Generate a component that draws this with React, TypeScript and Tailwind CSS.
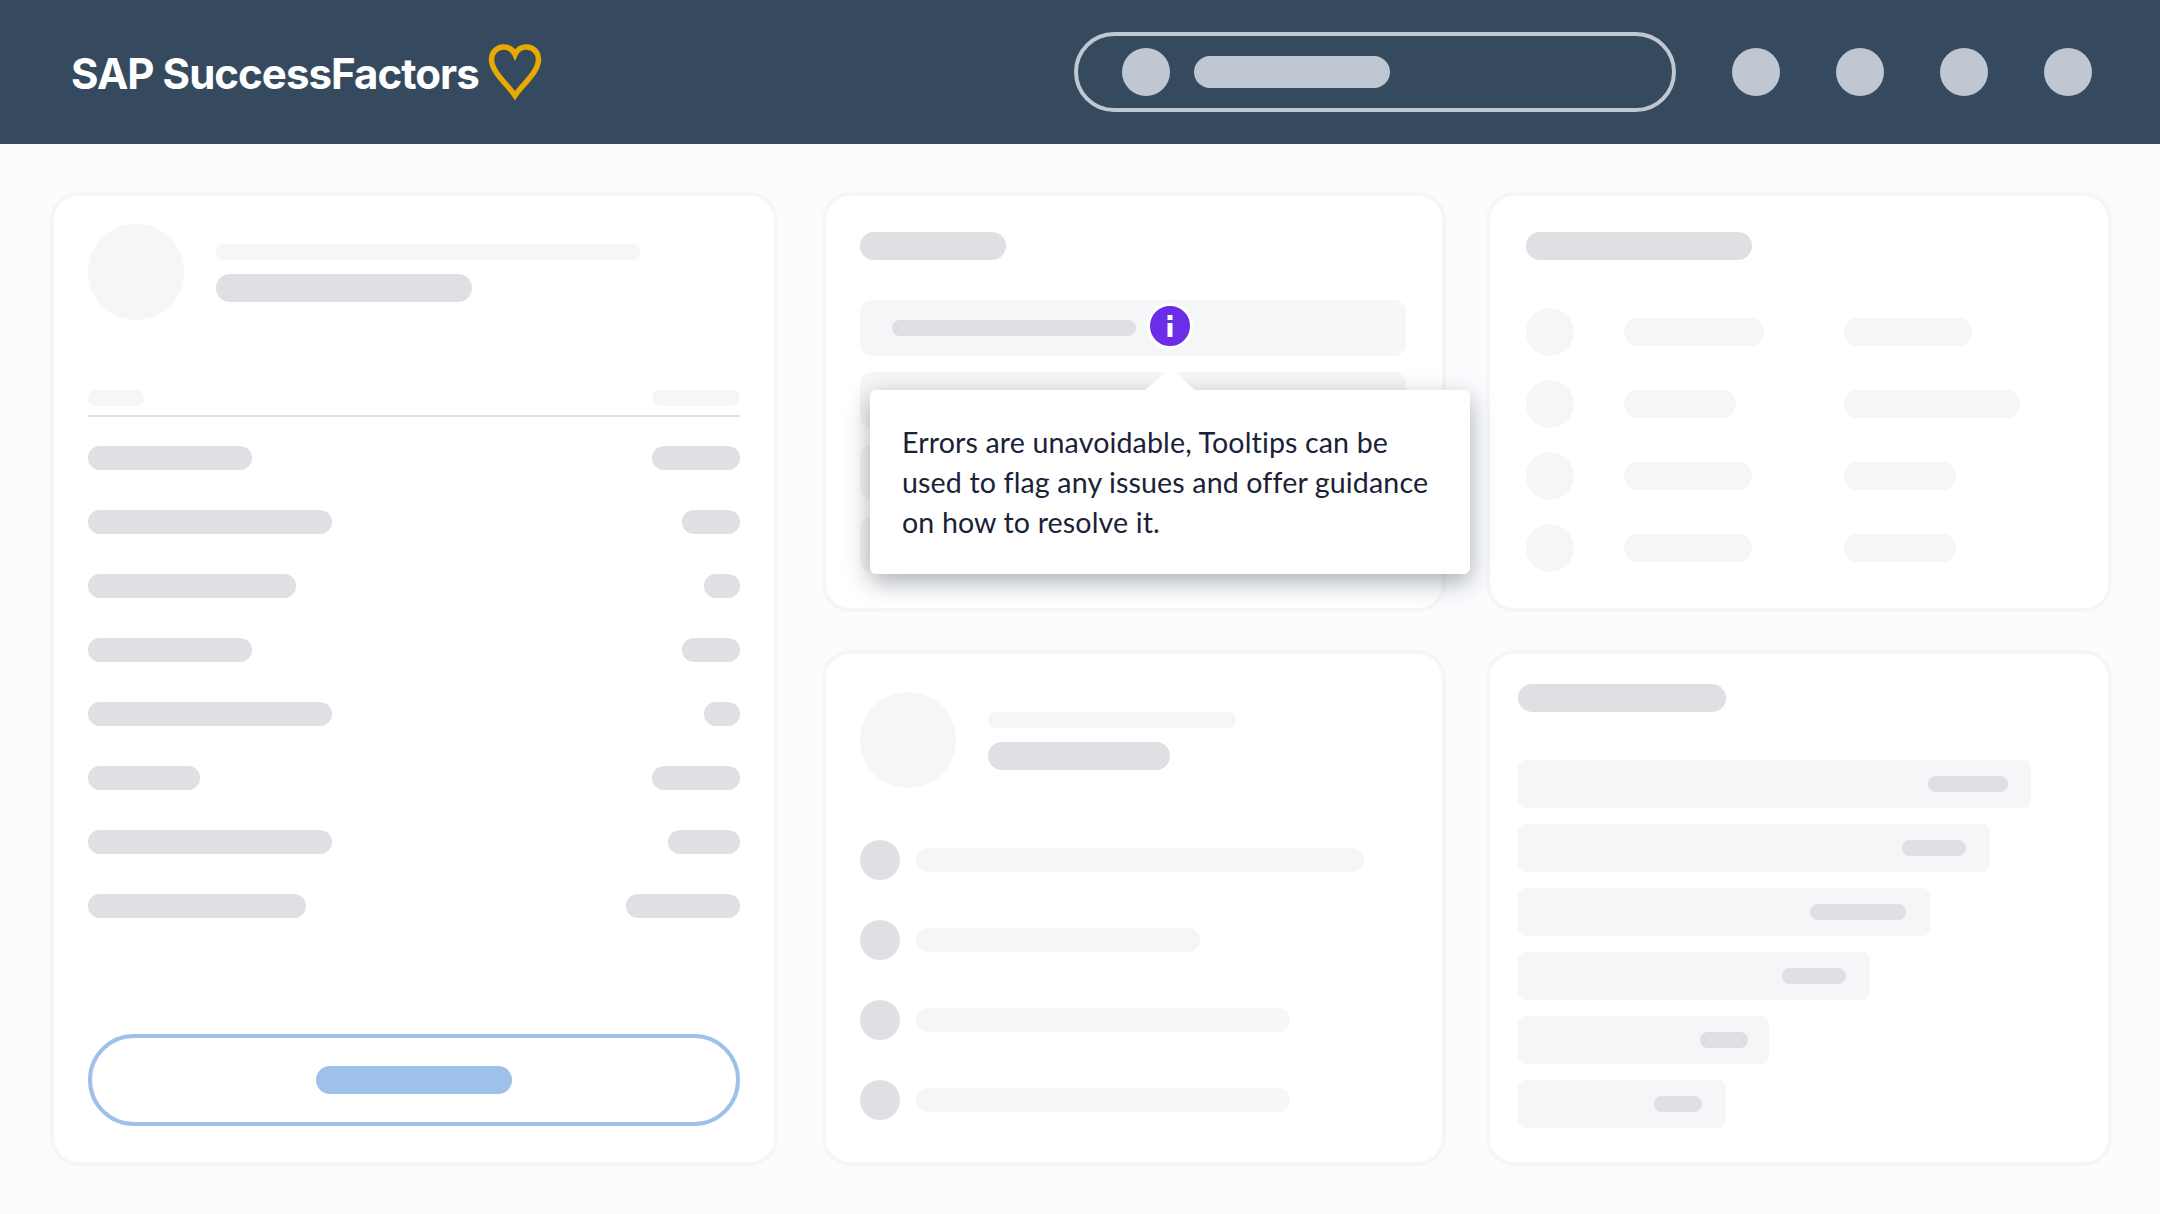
const headerDots = [0, 1, 2, 3]

const balanceRows = [
  { left: 'w-[164px]', right: 'w-[88px]' },
  { left: 'w-[244px]', right: 'w-[58px]' },
  { left: 'w-[208px]', right: 'w-[36px]' },
  { left: 'w-[164px]', right: 'w-[58px]' },
  { left: 'w-[244px]', right: 'w-[36px]' },
  { left: 'w-[112px]', right: 'w-[88px]' },
  { left: 'w-[244px]', right: 'w-[72px]' },
  { left: 'w-[218px]', right: 'w-[114px]' },
]

const peopleRows = [
  { first: 'w-[140px]', second: 'w-[128px]' },
  { first: 'w-[112px]', second: 'w-[176px]' },
  { first: 'w-[128px]', second: 'w-[112px]' },
  { first: 'w-[128px]', second: 'w-[112px]' },
]

const listRows = ['w-[448px]', 'w-[284px]', 'w-[374px]', 'w-[374px]']

const barRows = [
  { bar: 'w-[513px] pr-[23px]', label: 'w-[80px]' },
  { bar: 'w-[472px] pr-[24px]', label: 'w-[64px]' },
  { bar: 'w-[412px] pr-[24px]', label: 'w-[96px]' },
  { bar: 'w-[352px] pr-[24px]', label: 'w-[64px]' },
  { bar: 'w-[251px] pr-[21px]', label: 'w-[48px]' },
  { bar: 'w-[208px] pr-[24px]', label: 'w-[48px]' },
]

const cardClass = 'rounded-[28px] border-4 border-[#f5f6f8] bg-white'

const HeartLogo = () => (
  <svg width="54" height="56" viewBox="0 0 54 56" className="ml-[9px]">
    <path
      d="M27 51.5C20 41 3.5 28 3.5 15.5C3.5 8 9 3 15.5 3C20.5 3 25 6 27 10.5C29 6 33.5 3 38.5 3C45 3 50.5 8 50.5 15.5C50.5 28 34 41 27 51.5Z"
      fill="none"
      stroke="#e9a900"
      strokeWidth="5.5"
      strokeLinejoin="miter"
    />
  </svg>
)

const Header = () => (
  <header className="flex h-[144px] items-center bg-[#354a5e] pl-[71px] pr-[68px]">
    <span className="translate-y-[2px] font-['Inter',sans-serif] text-[42px] font-bold leading-none tracking-[-0.95px] text-white">
      SAP SuccessFactors
    </span>
    <HeartLogo />
    <div className="ml-auto flex items-center gap-[56px]">
      <div className="flex h-[80px] w-[602px] items-center gap-[24px] rounded-full border-4 border-[#bfc7d3] pl-[44px]">
        <div className="size-[48px] rounded-full bg-[#bfc7d3]" />
        <div className="h-[32px] w-[196px] rounded-full bg-[#bfc7d3]" />
      </div>
      {headerDots.map((dot) => (
        <div key={dot} className="size-[48px] rounded-full bg-[#bfc7d3]" />
      ))}
    </div>
  </header>
)

const BalanceCard = () => (
  <section className={`${cardClass} mr-[44px] flex h-[974px] w-[728px] flex-col px-[34px] pb-[36px] pt-[28px]`}>
    <div className="flex items-center gap-[32px]">
      <div className="size-[96px] rounded-full bg-[#f4f6f7]" />
      <div className="flex flex-col gap-[14px] pt-[2px]">
        <div className="h-[16px] w-[424px] rounded-full bg-[#f4f6f7]" />
        <div className="h-[28px] w-[256px] rounded-full bg-[#dee0e3]" />
      </div>
    </div>
    <div className="mt-[70px] flex justify-between border-b-2 border-[#dee0e3] pb-[9px]">
      <div className="h-[16px] w-[56px] rounded-full bg-[#f4f6f7]" />
      <div className="h-[16px] w-[88px] rounded-full bg-[#f4f6f7]" />
    </div>
    <div className="mt-[29px] flex flex-col gap-[40px]">
      {balanceRows.map((row, index) => (
        <div key={index} className="flex justify-between">
          <div className={`h-[24px] rounded-full bg-[#dee0e3] ${row.left}`} />
          <div className={`h-[24px] rounded-full bg-[#dee0e3] ${row.right}`} />
        </div>
      ))}
    </div>
    <div className="mt-auto flex h-[92px] items-center justify-center rounded-full border-4 border-[#9dc1e8]">
      <div className="h-[28px] w-[196px] rounded-full bg-[#9dc1e8]" />
    </div>
  </section>
)

const Tooltip = () => (
  <div className="absolute left-[10px] top-[90px] z-10 w-[600px] rounded-[6px] bg-white pb-[32px] pl-[32px] pr-[34px] pt-[32px] shadow-[0_8px_24px_rgba(20,30,50,0.36)]">
    <svg width="50" height="22" viewBox="0 0 50 22" className="absolute left-[275px] top-[-22px]">
      <polygon points="25,0 50,22 0,22" fill="#ffffff" />
    </svg>
    <p className="font-['Lato',sans-serif] text-[28.6px] leading-[40px] tracking-[0.13px] text-[#1a2238]">
      Errors are unavoidable, Tooltips can be used to flag any issues and offer guidance on how to resolve it.
    </p>
  </div>
)

const InfoBadge = () => (
  <div className="flex size-[46px] -translate-y-[2px] items-center justify-center rounded-full border-[3px] border-white bg-[#6b2ee6]">
    <svg width="6" height="22" viewBox="0 0 6 22">
      <rect x="0.5" y="0" width="5" height="5" fill="#ffffff" />
      <rect x="0.5" y="8" width="5" height="14" fill="#ffffff" />
    </svg>
  </div>
)

const TooltipCard = () => (
  <section className={`${cardClass} h-[420px] pl-[34px] pr-[36px] pt-[36px]`}>
    <div className="h-[28px] w-[146px] rounded-full bg-[#dee0e3]" />
    <div className="relative mt-[40px] flex flex-col gap-[16px]">
      <div className="flex h-[56px] items-center gap-[11px] rounded-[12px] bg-[#f4f6f7] pl-[32px]">
        <div className="h-[16px] w-[244px] rounded-full bg-[#dee0e3]" />
        <InfoBadge />
      </div>
      <div className="h-[56px] rounded-[12px] bg-[#f4f6f7]" />
      <div className="h-[56px] rounded-[12px] bg-[#f4f6f7]" />
      <div className="h-[56px] rounded-[12px] bg-[#f4f6f7]" />
      <Tooltip />
    </div>
  </section>
)

const PeopleCard = () => (
  <section className={`${cardClass} h-[420px] px-[36px] pt-[36px]`}>
    <div className="h-[28px] w-[226px] rounded-full bg-[#dee0e3]" />
    <div className="mt-[48px] flex flex-col gap-[24px]">
      {peopleRows.map((row, index) => (
        <div key={index} className="flex items-center">
          <div className="mr-[50px] size-[48px] rounded-full bg-[#f4f6f7]" />
          <div className="w-[220px]">
            <div className={`h-[28px] rounded-full bg-[#f4f6f7] ${row.first}`} />
          </div>
          <div className={`h-[28px] rounded-full bg-[#f4f6f7] ${row.second}`} />
        </div>
      ))}
    </div>
  </section>
)

const ListCard = () => (
  <section className={`${cardClass} h-[516px] px-[34px] pt-[38px]`}>
    <div className="flex items-center gap-[32px]">
      <div className="size-[96px] rounded-full bg-[#f4f6f7]" />
      <div className="flex flex-col gap-[14px] pt-[2px]">
        <div className="h-[16px] w-[248px] rounded-full bg-[#f4f6f7]" />
        <div className="h-[28px] w-[182px] rounded-full bg-[#dee0e3]" />
      </div>
    </div>
    <div className="mt-[52px] flex flex-col gap-[40px]">
      {listRows.map((width, index) => (
        <div key={index} className="flex items-center gap-[16px]">
          <div className="size-[40px] rounded-full bg-[#dee0e3]" />
          <div className={`h-[24px] rounded-full bg-[#f4f6f7] ${width}`} />
        </div>
      ))}
    </div>
  </section>
)

const BarsCard = () => (
  <section className={`${cardClass} h-[516px] px-[28px] pt-[30px]`}>
    <div className="h-[28px] w-[208px] rounded-full bg-[#dee0e3]" />
    <div className="mt-[48px] flex flex-col gap-[16px]">
      {barRows.map((row, index) => (
        <div
          key={index}
          className={`flex h-[48px] items-center justify-end rounded-[8px] bg-[#f4f6f7] ${row.bar}`}
        >
          <div className={`h-[16px] rounded-full bg-[#dee0e3] ${row.label}`} />
        </div>
      ))}
    </div>
  </section>
)

export default function App() {
  return (
    <div className="h-[1214px] w-[2160px] overflow-hidden bg-[#fbfcfe]">
      <Header />
      <main className="flex pl-[50px] pt-[48px]">
        <BalanceCard />
        <div className="mr-[40px] flex w-[624px] flex-col gap-[38px]">
          <TooltipCard />
          <ListCard />
        </div>
        <div className="flex w-[626px] flex-col gap-[38px]">
          <PeopleCard />
          <BarsCard />
        </div>
      </main>
    </div>
  )
}
